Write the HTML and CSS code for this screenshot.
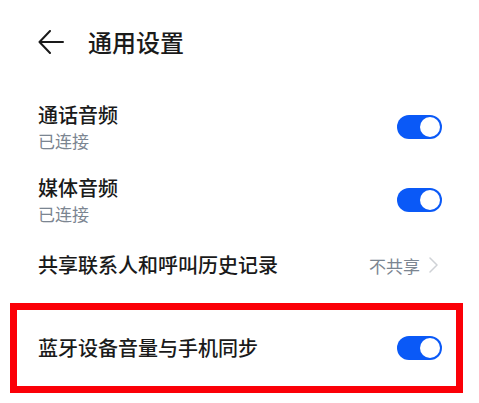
FILE: index.html
```html
<!DOCTYPE html>
<html lang="zh-CN">

<head>
    <meta charset="UTF-8" />
    <meta name="viewport" content="width=device-width,initial-scale=1.0" />
    <title>通用设置</title>
    <link rel="stylesheet" href="styles.css">
</head>

<body>
    <div class="header">
        <svg class="back" width="26" height="24" viewBox="0 0 26 24">
            <path d="M25 12H2M12 1L1.5 12L12 23" fill="none" stroke="#1a1a1a" stroke-width="2" stroke-linecap="round" stroke-linejoin="round" />
        </svg>
        <div class="title">通用设置</div>
    </div>

    <div class="list">
        <div class="row tall">
            <div class="row-text">
                <div class="row-title">通话音频</div>
                <div class="row-sub">已连接</div>
            </div>
            <div class="toggle on"><span class="knob"></span></div>
        </div>
        <div class="row tall">
            <div class="row-text">
                <div class="row-title">媒体音频</div>
                <div class="row-sub">已连接</div>
            </div>
            <div class="toggle on"><span class="knob"></span></div>
        </div>
        <div class="row short">
            <div class="row-title">共享联系人和呼叫历史记录</div>
            <div class="row-value">
                不共享
                <svg width="9" height="16" viewBox="0 0 9 16">
                    <path d="M1 1L8 8L1 15" fill="none" stroke="#cfd2d6" stroke-width="1.5" stroke-linecap="round" stroke-linejoin="round" />
                </svg>
            </div>
        </div>
        <div class="highlight">
            <div class="row boxed">
                <div class="row-title">蓝牙设备音量与手机同步</div>
                <div class="toggle on"><span class="knob"></span></div>
            </div>
        </div>
    </div>
</body>

</html>
```

FILE: styles.css
```css
body {
    margin: 0;
    font-family: "Noto Sans CJK SC", "Noto Sans", sans-serif;
    background: #fff;
    color: #1a1a1a;
}

.header {
    height: 84px;
    display: flex;
    align-items: center;
    padding-left: 38px;
}

.back {
    margin-right: 24px;
}

.title {
    font-size: 24px;
    font-weight: 500;
    line-height: 32px;
}

.list {
    padding-top: 6px;
}

.row {
    display: flex;
    align-items: center;
    justify-content: space-between;
    padding: 0 37px 0 38px;
}

.row.tall {
    height: 73px;
}

.row.short {
    height: 58px;
}

.row-title {
    font-size: 20px;
    line-height: 28px;
    font-weight: 500;
}

.row-sub {
    font-size: 17px;
    line-height: 24px;
    color: #7b8591;
}

.row-value {
    display: flex;
    align-items: center;
    gap: 9px;
    font-size: 17px;
    color: #7b8591;
    margin-right: 4px;
}

.toggle {
    width: 45px;
    height: 24px;
    border-radius: 12px;
    background: #c8ccd2;
    display: flex;
    align-items: center;
    padding: 0 2px;
    box-sizing: border-box;
}

.toggle.on {
    background: #0a59f7;
    justify-content: flex-end;
}

.knob {
    width: 20px;
    height: 20px;
    border-radius: 50%;
    background: #fff;
}

.highlight {
    margin: 9px 16px 0 10px;
    border: 7px solid #fb0007;
}

.row.boxed {
    height: 76px;
    padding: 0 14px 0 21px;
}
```
